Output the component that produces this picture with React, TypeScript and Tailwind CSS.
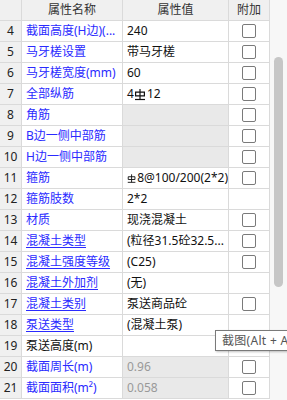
import React from 'react';

type Row = {
  no: number;
  name: string;
  value?: React.ReactNode;
  nameColor?: 'blue' | 'black';
  underline?: boolean;
  grayValue?: boolean;
  dimValue?: boolean;
  check?: boolean;
};

// HRB400 rebar mark
function RebarMark() {
  return (
    <svg width="12" height="13" viewBox="0 0 12 13" className="inline-block align-[-2px] mr-[1px]">
      <path d="M6 1v10.5" stroke="#111" strokeWidth="1.2" fill="none" />
      <path d="M1.6 4.2h8.8v3.6H1.6z" stroke="#111" strokeWidth="1.2" fill="none" />
      <path d="M1 11.5h10" stroke="#111" strokeWidth="1.2" fill="none" />
    </svg>
  );
}

const rows: Row[] = [
  { no: 4, name: '截面高度(H边)(...', value: '240', check: true },
  { no: 5, name: '马牙槎设置', value: '带马牙槎', check: true },
  { no: 6, name: '马牙槎宽度(mm)', value: '60', check: true },
  { no: 7, name: '全部纵筋', value: <>4<RebarMark />12</>, check: true },
  { no: 8, name: '角筋', grayValue: true, check: true },
  { no: 9, name: 'B边一侧中部筋', grayValue: true, check: true },
  { no: 10, name: 'H边一侧中部筋', grayValue: true, check: true },
  { no: 11, name: '箍筋', value: <><RebarMark />8@100/200(2*2)</>, check: true },
  { no: 12, name: '箍筋肢数', value: '2*2' },
  { no: 13, name: '材质', value: '现浇混凝土', check: true },
  { no: 14, name: '混凝土类型', value: '(粒径31.5砼32.5...', underline: true, check: true },
  { no: 15, name: '混凝土强度等级', value: '(C25)', underline: true, check: true },
  { no: 16, name: '混凝土外加剂', value: '(无)', underline: true },
  { no: 17, name: '混凝土类别', value: '泵送商品砼', underline: true, check: true },
  { no: 18, name: '泵送类型', value: '(混凝土泵)', underline: true },
  { no: 19, name: '泵送高度(m)', nameColor: 'black' },
  { no: 20, name: '截面周长(m)', value: '0.96', grayValue: true, dimValue: true, check: true },
  { no: 21, name: '截面面积(m²)', value: '0.058', grayValue: true, dimValue: true, check: true },
];

const cell = 'h-[21px] border-r border-b border-[#dadada] flex items-center overflow-hidden whitespace-nowrap';

export default function App() {
  return (
    <div className="relative w-[287px] h-[400px] overflow-hidden bg-white flex font-['Noto_Sans','Noto_Sans_CJK_SC',sans-serif] text-[12px] leading-[20px] text-[#111]">
      <div className="w-[270px] grid grid-cols-[22px_101px_106px_41px] content-start">
        {/* header */}
        <div className={`${cell} bg-[#f0f0f0]`} />
        <div className={`${cell} bg-[#f0f0f0] justify-center text-[#333]`}>属性名称</div>
        <div className={`${cell} bg-[#f0f0f0] justify-center text-[#333]`}>属性值</div>
        <div className={`${cell} bg-[#f0f0f0] justify-center text-[#333]`}>附加</div>

        {rows.map((r) => (
          <React.Fragment key={r.no}>
            <div className={`${cell} bg-[#f0f0f0] justify-center text-[#222]`}>{r.no}</div>
            <div
              className={`${cell} pl-[4px] ${r.nameColor === 'black' ? 'text-[#111]' : 'text-[#2a2aff]'} ${
                r.underline ? 'underline underline-offset-2 decoration-[#2a2aff]' : ''
              }`}
            >
              {r.name}
            </div>
            <div
              className={`${cell} pl-[4px] ${r.grayValue ? 'bg-[#e9e9e9]' : ''} ${
                r.dimValue ? 'text-[#999]' : 'text-[#111]'
              }`}
            >
              {r.value}
            </div>
            <div className={`${cell} justify-center`}>
              {r.check && <div className="w-[14px] h-[14px] rounded-[2px] border border-[#7a7a7a] bg-white" />}
            </div>
          </React.Fragment>
        ))}
      </div>

      {/* scrollbar */}
      <div className="w-[17px] h-full bg-[#f7f7f7] flex flex-col items-center pt-[57px]">
        <div className="w-[9px] h-[230px] rounded-full bg-[#c6c6c6]" />
      </div>

      {/* tooltip */}
      <div className="absolute left-[215px] top-[330px] w-[90px] h-[21px] pl-[6px] bg-white border border-[#7a7a7a] shadow-[1px_1px_2px_rgba(0,0,0,0.25)] flex items-center whitespace-nowrap text-[#555] tracking-[0.3px]">
        截图(Alt + A)
      </div>
    </div>
  );
}
